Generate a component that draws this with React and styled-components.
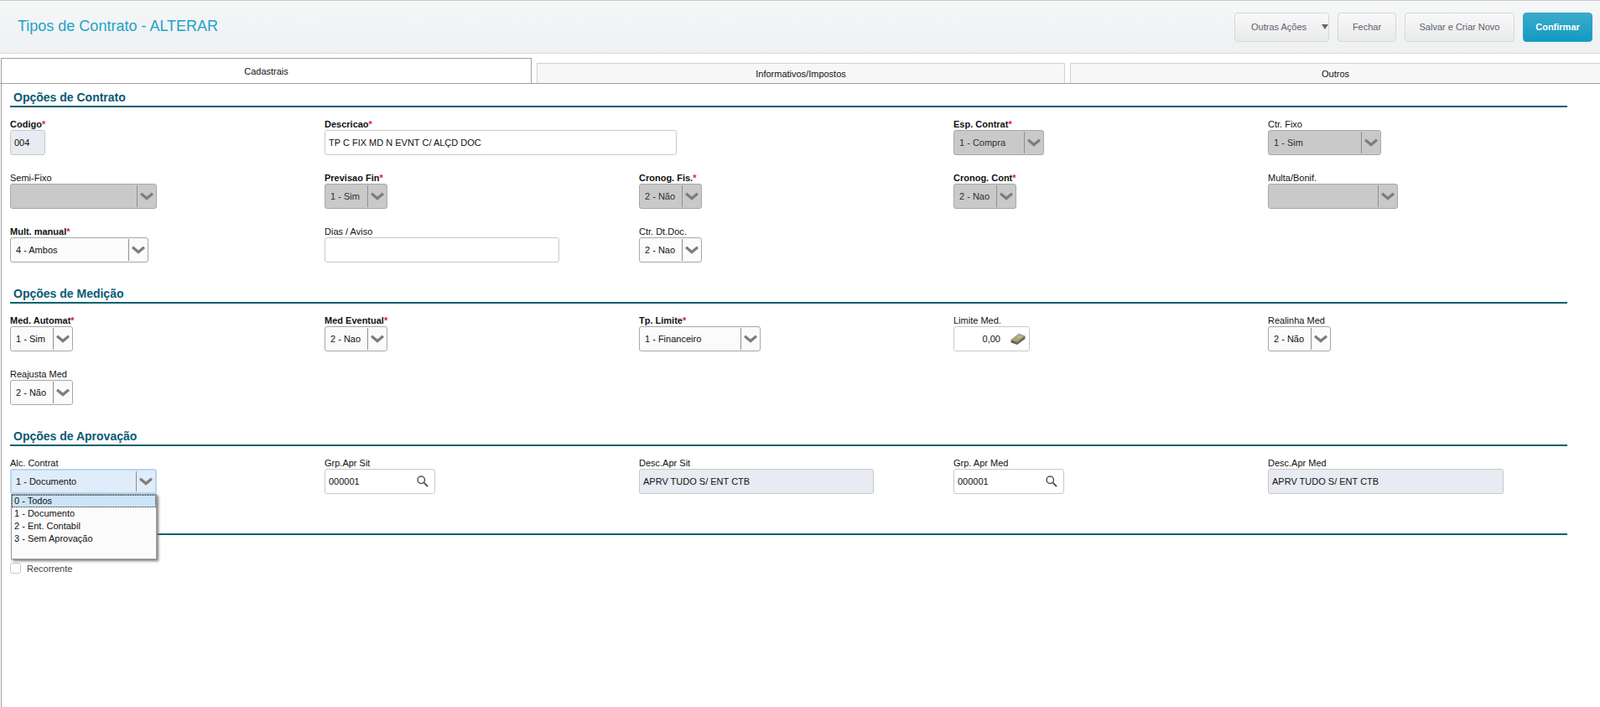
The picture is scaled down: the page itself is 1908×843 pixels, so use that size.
import React from 'react';
import styled, { createGlobalStyle } from 'styled-components';

const GlobalStyle = createGlobalStyle`
    html, body {
        margin: 0;
        padding: 0;
        background: #ffffff;
        font-family: "Liberation Sans", Arial, sans-serif;
        font-size: 11px;
        color: #111111;
    }
`

const Page = styled.div`
    width: 1908px;
    height: 843px;
    overflow: hidden;
    box-sizing: border-box;
    border-top: 1px solid #c8ccd2;
`

const Header = styled.header`
    display: flex;
    justify-content: space-between;
    align-items: center;
    height: 63px;
    box-sizing: border-box;
    padding: 0 9px 0 21px;
    background: linear-gradient(#f6f7f7, #eef0f2);
    border-bottom: 1px solid #d8d8d8;
`

const Title = styled.h1`
    margin: 0 0 2px;
    font-size: 18px;
    font-weight: 400;
    color: #1ea3c8;
`

const Actions = styled.div`
    display: flex;
    gap: 10px;
`

const Button = styled.button`
    display: flex;
    align-items: center;
    justify-content: ${p => (p.$menu ? 'flex-start' : 'center')};
    gap: 18px;
    width: ${p => p.$width}px;
    height: 35px;
    padding: 0 0 0 ${p => (p.$menu ? 19 : 0)}px;
    box-sizing: border-box;
    white-space: nowrap;
    font-family: inherit;
    font-size: 11px;
    border-radius: 4px;
    color: ${p => (p.$primary ? '#ffffff' : '#5b6270')};
    font-weight: ${p => (p.$primary ? 700 : 400)};
    background: ${p => (p.$primary ? 'linear-gradient(#3babc9, #129ac1)' : 'linear-gradient(#f8f8f8, #e9eaea)')};
    border: 1px solid ${p => (p.$primary ? '#2aa3c5' : '#d6d7d8')};
`

const Caret = styled.span`
    flex: none;
    width: 0;
    height: 0;
    border-left: 4px solid transparent;
    border-right: 4px solid transparent;
    border-top: 6px solid #5f6675;
`

const Tabs = styled.nav`
    display: flex;
    align-items: flex-end;
    gap: 6px;
    height: 36px;
    padding-left: 1px;
    box-sizing: border-box;
    border-bottom: 1px solid #a0a0a0;
`

const Tab = styled.div`
    flex: 0 0 ${p => p.$width}px;
    display: flex;
    align-items: center;
    justify-content: center;
    box-sizing: border-box;
    height: ${p => (p.$active ? 31 : 24)}px;
    margin-bottom: ${p => (p.$active ? -1 : 0)}px;
    background: ${p => (p.$active ? '#ffffff' : '#f7f7f7')};
    border: 1px solid ${p => (p.$active ? '#a0a0a0' : '#d2d2d2')};
    border-bottom: ${p => (p.$active ? '1px solid #a0a0a0' : 'none')};
    color: #111111;
`

const Content = styled.main`
    border-left: 1px solid #a0a0a0;
    margin-left: 1px;
    height: 743px;
    padding: 0 0 0 10px;
`

const Section = styled.section`
    width: 1857px;
`

const SectionHead = styled.div`
    display: flex;
    align-items: flex-end;
    height: ${p => p.$height}px;
    margin-left: ${p => p.$inset || 0}px;
    padding-left: 4px;
    padding-bottom: 2px;
    box-sizing: border-box;
    border-bottom: 2px solid #00606f;
    font-size: 14px;
    font-weight: 700;
    color: #0a5a74;
`

const Grid = styled.div`
    display: grid;
    grid-template-columns: repeat(5, 375px);
    row-gap: 21px;
    padding-top: 14px;
    padding-bottom: ${p => p.$bottom || 0}px;
`

const Field = styled.div`
    display: flex;
    flex-direction: column;
    align-items: flex-start;
`

const Label = styled.label`
    display: block;
    height: 13px;
    line-height: 13px;
    font-weight: ${p => (p.$bold ? 700 : 400)};
    color: #111111;
    em {
        font-style: normal;
        color: #e0202a;
    }
`

const Input = styled.div`
    display: flex;
    align-items: center;
    justify-content: ${p => (p.$right ? 'flex-end' : 'space-between')};
    gap: 12px;
    width: ${p => p.$width}px;
    height: 30px;
    box-sizing: border-box;
    padding: 0 ${p => (p.$right ? 4 : 7)}px 0 4px;
    font-size: 11px;
    border-radius: 3px;
    background: ${p => (p.$readOnly ? '#e8ebf2' : '#ffffff')};
    border: 1px solid #c8c8c8;
`

const Select = styled.div`
    display: flex;
    width: ${p => p.$width}px;
    height: 30px;
    box-sizing: border-box;
    border-radius: 3px;
    background: ${p => (p.$disabled ? '#c9c9c9' : p.$focus ? '#e0ecf9' : '#fbfbfb')};
    border: ${p => (p.$focus ? '2px solid #b5d6f5' : '1px solid #a8a8a8')};
    color: ${p => (p.$disabled ? '#2e2e2e' : '#111111')};
`

const SelectValue = styled.div`
    flex: 1;
    display: flex;
    align-items: center;
    padding-left: ${p => (p.$focus ? 5 : 6)}px;
`

const SelectArrow = styled.div`
    flex: 0 0 22px;
    display: flex;
    align-items: center;
    justify-content: center;
    margin: 1px 0;
    border-left: 1px solid #8f8f8f;
    svg {
        display: block;
    }
`

const AlcWrap = styled.div`
    position: relative;
`

const Dropdown = styled.ul`
    position: absolute;
    top: 30px;
    left: 1px;
    z-index: 5;
    width: 174px;
    height: 78px;
    margin: 0;
    padding: 0;
    box-sizing: border-box;
    list-style: none;
    background: #fbfbfb;
    border: 1px solid #9a9a9a;
    box-shadow: 2px 2px 3px #7c7c7c;
`

const Option = styled.li`
    height: 15px;
    line-height: 15px;
    box-sizing: border-box;
    padding-left: 3px;
    background: ${p => (p.$active ? '#cde4f7' : 'transparent')};
    outline: ${p => (p.$active ? '1px dotted #222222' : 'none')};
    outline-offset: -1px;
`

const CheckRow = styled.div`
    display: flex;
    align-items: center;
    gap: 7px;
    margin-top: 33px;
    color: #444444;
`

const Check = styled.span`
    width: 13px;
    height: 13px;
    box-sizing: border-box;
    border: 1px solid #c8c8c8;
    border-radius: 3px;
    background: #ffffff;
`

function Chevron() {
    return (
        <svg width="16" height="10" viewBox="0 0 16 10">
            <path d="M1 1.8 L8 7.6 L15 1.8" fill="none" stroke="#7d7d7d" strokeWidth="3.2" />
        </svg>
    )
}

function SearchIcon() {
    return (
        <svg width="14" height="14" viewBox="0 0 14 14">
            <circle cx="5.3" cy="5.3" r="4.2" fill="none" stroke="#4d5563" strokeWidth="1.5" />
            <path d="M8.6 8.6 L13 13" stroke="#4d5563" strokeWidth="2" />
        </svg>
    )
}

function MoneyIcon() {
    return (
        <svg width="18" height="16" viewBox="0 0 18 16">
            <path d="M0.5 9.5 L10 2 L17.5 5 L17.5 8 L8 15 L0.5 12.5 Z" fill="#6f6553" />
            <path d="M0.5 9 L10 1.5 L17.5 4.5 L8 12 Z" fill="#aaa18e" />
            <path d="M7.5 6.5 L10.5 4 L13.5 5.2 L10.5 7.7 Z" fill="#a6cf62" />
        </svg>
    )
}

function SelectField({ label, required, bold, value, width, disabled }) {
    return (
        <Field>
            <Label $bold={bold}>{label}{required && <em>*</em>}</Label>
            <Select $width={width} $disabled={disabled}>
                <SelectValue>{value}</SelectValue>
                <SelectArrow><Chevron /></SelectArrow>
            </Select>
        </Field>
    )
}

function TextField({ label, required, bold, value, width, readOnly, children, right }) {
    return (
        <Field>
            <Label $bold={bold}>{label}{required && <em>*</em>}</Label>
            <Input $width={width} $readOnly={readOnly} $right={right}>
                {value}
                {children}
            </Input>
        </Field>
    )
}

export default function App() {
    return (
        <Page>
            <GlobalStyle />
            <Header>
                <Title>Tipos de Contrato - ALTERAR</Title>
                <Actions>
                    <Button $width={113} $menu>Outras Ações <Caret /></Button>
                    <Button $width={70}>Fechar</Button>
                    <Button $width={131}>Salvar e Criar Novo</Button>
                    <Button $width={83} $primary>Confirmar</Button>
                </Actions>
            </Header>
            <Tabs>
                <Tab $width={633} $active>Cadastrais</Tab>
                <Tab $width={630}>Informativos/Impostos</Tab>
                <Tab $width={633}>Outros</Tab>
            </Tabs>
            <Content>
                <Section>
                    <SectionHead $height={28}>Opções de Contrato</SectionHead>
                    <Grid $bottom={21}>
                        <TextField label="Codigo" required bold value="004" width={42} readOnly />
                        <TextField label="Descricao" required bold value="TP C FIX MD N EVNT C/ ALÇD DOC" width={420} />
                        <Field />
                        <SelectField label="Esp. Contrat" required bold value="1 - Compra" width={108} disabled />
                        <SelectField label="Ctr. Fixo" value="1 - Sim" width={135} disabled />
                        <SelectField label="Semi-Fixo" value="" width={175} disabled />
                        <SelectField label="Previsao Fin" required bold value="1 - Sim" width={75} disabled />
                        <SelectField label="Cronog. Fis." required bold value="2 - Não" width={75} disabled />
                        <SelectField label="Cronog. Cont" required bold value="2 - Nao" width={75} disabled />
                        <SelectField label="Multa/Bonif." value="" width={155} disabled />
                        <SelectField label="Mult. manual" required bold value="4 - Ambos" width={165} />
                        <TextField label="Dias / Aviso" value="" width={280} />
                        <SelectField label="Ctr. Dt.Doc." value="2 - Nao" width={75} />
                    </Grid>
                </Section>
                <Section>
                    <SectionHead $height={28}>Opções de Medição</SectionHead>
                    <Grid $bottom={28}>
                        <SelectField label="Med. Automat" required bold value="1 - Sim" width={75} />
                        <SelectField label="Med Eventual" required bold value="2 - Nao" width={75} />
                        <SelectField label="Tp. Limite" required bold value="1 - Financeiro" width={145} />
                        <TextField label="Limite Med." value="0,00" width={91} right>
                            <MoneyIcon />
                        </TextField>
                        <SelectField label="Realinha Med" value="2 - Não" width={75} />
                        <SelectField label="Reajusta Med" value="2 - Não" width={75} />
                    </Grid>
                </Section>
                <Section>
                    <SectionHead $height={21}>Opções de Aprovação</SectionHead>
                    <Grid>
                        <Field>
                            <Label>Alc. Contrat</Label>
                            <AlcWrap>
                                <Select $width={175} $focus>
                                    <SelectValue $focus>1 - Documento</SelectValue>
                                    <SelectArrow><Chevron /></SelectArrow>
                                </Select>
                                <Dropdown>
                                    <Option $active>0 - Todos</Option>
                                    <Option>1 - Documento</Option>
                                    <Option>2 - Ent. Contabil</Option>
                                    <Option>3 - Sem Aprovação</Option>
                                </Dropdown>
                            </AlcWrap>
                        </Field>
                        <TextField label="Grp.Apr Sit" value="000001" width={132}><SearchIcon /></TextField>
                        <TextField label="Desc.Apr Sit" value="APRV TUDO S/ ENT CTB" width={280} readOnly />
                        <TextField label="Grp. Apr Med" value="000001" width={132}><SearchIcon /></TextField>
                        <TextField label="Desc.Apr Med" value="APRV TUDO S/ ENT CTB" width={281} readOnly />
                    </Grid>
                </Section>
                <Section>
                    <SectionHead $height={49} $inset={4} />
                    <CheckRow>
                        <Check />
                        Recorrente
                    </CheckRow>
                </Section>
            </Content>
        </Page>
    )
}
